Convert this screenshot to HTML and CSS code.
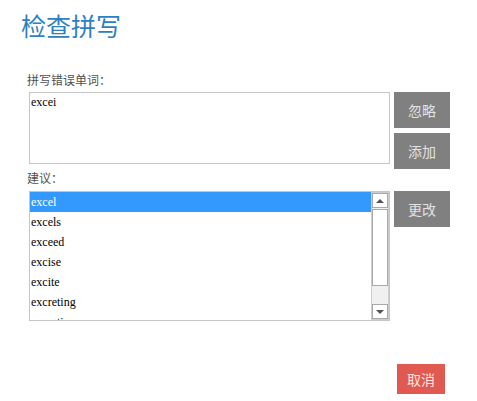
FILE: index.html
```html
<!DOCTYPE html>
<html lang="zh-CN">
<head>
<meta charset="utf-8">
<title>检查拼写</title>
<link rel="stylesheet" href="styles.css">
</head>
<body>
<div class="dialog">
  <h1 class="title">检查拼写</h1>
  <div class="label label-first">拼写错误单词：</div>
  <div class="row">
    <div class="wordbox">excei</div>
    <div class="btncol">
      <div class="btn">忽略</div>
      <div class="btn">添加</div>
    </div>
  </div>
  <div class="label label-second">建议：</div>
  <div class="row">
    <div class="listbox">
      <div class="items">
        <div class="item selected">excel</div>
        <div class="item">excels</div>
        <div class="item">exceed</div>
        <div class="item">excise</div>
        <div class="item">excite</div>
        <div class="item">excreting</div>
        <div class="item">excretion</div>
      </div>
      <div class="sb">
        <div class="sb-btn"><span class="tri-up"></span></div>
        <div class="sb-thumb"></div>
        <div class="sb-track"></div>
        <div class="sb-btn"><span class="tri-down"></span></div>
      </div>
    </div>
    <div class="btncol">
      <div class="btn">更改</div>
    </div>
  </div>
  <div class="footer">
    <div class="btn-cancel">取消</div>
  </div>
</div>
</body>
</html>
```

FILE: styles.css
```css
html, body {
  margin: 0;
  padding: 0;
  background: #ffffff;
}

body {
  font-family: "Noto Sans CJK SC", "Noto Sans", sans-serif;
}

.dialog {
  width: 477px;
  height: 401px;
  overflow: hidden;
}

.title {
  margin: 0;
  padding: 8px 0 0 21px;
  font-size: 25px;
  line-height: 34px;
  font-weight: normal;
  color: #2e7fc2;
}

.label {
  font-size: 12px;
  line-height: 16px;
  color: #505050;
  padding-left: 27px;
}

.label-first {
  margin-top: 30px;
  margin-bottom: 4px;
}

.label-second {
  margin-top: 1px;
  margin-bottom: 5px;
}

.row {
  display: flex;
  gap: 4px;
  padding-left: 29px;
  align-items: flex-start;
}

.wordbox {
  box-sizing: border-box;
  width: 361px;
  height: 72px;
  border: 1px solid #c6c6c6;
  font-family: "Liberation Serif", serif;
  font-size: 12px;
  line-height: 16px;
  padding: 1px 0 0 1px;
  color: #000;
}

.btncol {
  display: flex;
  flex-direction: column;
  gap: 5px;
}

.btn {
  width: 56px;
  height: 36px;
  background: #808080;
  color: #e2e2e2;
  font-size: 14px;
  display: flex;
  align-items: center;
  justify-content: center;
}

.listbox {
  box-sizing: border-box;
  width: 361px;
  height: 130px;
  border: 1px solid #c6c6c6;
  display: flex;
  overflow: hidden;
}

.items {
  flex: 1;
  overflow: hidden;
}

.item {
  height: 20px;
  line-height: 20px;
  font-family: "Liberation Serif", serif;
  font-size: 12px;
  color: #000;
  padding-left: 1px;
  white-space: nowrap;
}

.item.selected {
  background: #3399ff;
  color: #ffffff;
}

.sb {
  box-sizing: border-box;
  width: 18px;
  height: 128px;
  background: #f0f0f0;
  border: 1px solid #cdcdcd;
  display: flex;
  flex-direction: column;
}

.sb-btn {
  box-sizing: border-box;
  height: 15px;
  background: #ffffff;
  border: 1px solid #a9a9a9;
  display: flex;
  align-items: center;
  justify-content: center;
}

.sb-thumb {
  box-sizing: border-box;
  height: 77px;
  margin-top: 1px;
  background: #ffffff;
  border: 1px solid #a9a9a9;
}

.sb-track {
  flex: 1;
}

.tri-up {
  width: 0;
  height: 0;
  border-left: 4px solid transparent;
  border-right: 4px solid transparent;
  border-bottom: 4px solid #555555;
}

.tri-down {
  width: 0;
  height: 0;
  border-left: 4px solid transparent;
  border-right: 4px solid transparent;
  border-top: 4px solid #555555;
}

.footer {
  display: flex;
  padding-left: 397px;
  margin-top: 43px;
}

.btn-cancel {
  width: 48px;
  height: 30px;
  background: #e05a51;
  color: #fbe4e1;
  font-size: 14px;
  display: flex;
  align-items: center;
  justify-content: center;
}
```
